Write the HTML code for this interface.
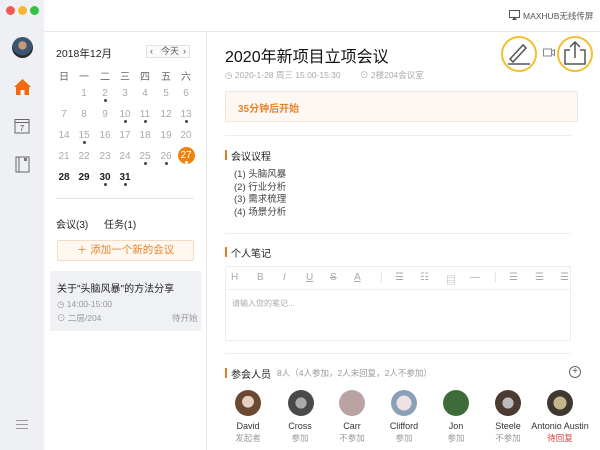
<!DOCTYPE html>
<html><head><meta charset="utf-8"><style>
*{margin:0;padding:0;box-sizing:border-box}
body{width:600px;height:450px;overflow:hidden;background:#fff;font-family:"Liberation Sans","Noto Sans CJK SC",sans-serif;position:relative;color:#333}
.a{position:absolute;white-space:nowrap}
.side{left:0;top:0;width:44px;height:450px;background:#eef0f4}
.dot{width:9px;height:9px;border-radius:50%;top:6px}
.cal span{position:absolute;width:20px;margin-left:-10px;text-align:center;font-size:10px;color:#aaa}
.cal span.b{color:#222;font-weight:bold}
.cal i{position:absolute;width:3px;height:3px;border-radius:50%;background:#444;margin-left:-1.5px}
.bar{width:2px;height:10px;background:#e8792a}
.av{width:26px;height:26px;border-radius:50%;top:390px}
.nm{font-size:9px;color:#333;text-align:center;width:70px;top:421px}
.st{font-size:8.5px;color:#999;text-align:center;width:70px;top:432px}
.tb{font-size:10px;color:#aaa;top:272px}
</style></head><body>
<div class="a side"></div>
<div class="a dot" style="left:6px;background:#f25a55"></div>
<div class="a dot" style="left:18px;background:#f6b632"></div>
<div class="a dot" style="left:30px;background:#33c246"></div>
<div class="a" style="left:44px;top:31px;width:556px;height:1px;background:#e6e6e6"></div>
<div class="a" style="left:206px;top:32px;width:1px;height:418px;background:#e6e6e6"></div>
<div class="a" style="left:12px;top:37px;width:21px;height:21px;border-radius:50%;background:radial-gradient(circle at 50% 40%,#c49a7a 0 25%,#3c5570 26% 60%,#2b2b2b 61%)"></div>
<svg class="a" style="left:13px;top:78px" width="19" height="18" viewBox="0 0 19 18"><path d="M9.5 1 L18 9 L16 9 L16 17 L11.5 17 L11.5 12 L7.5 12 L7.5 17 L3 17 L3 9 L1 9 Z" fill="#f26a10"/></svg>
<svg class="a" style="left:14px;top:117px" width="16" height="17" viewBox="0 0 16 17"><rect x="1" y="2.5" width="14" height="13.5" fill="none" stroke="#666"/><line x1="1" y1="5.5" x2="15" y2="5.5" stroke="#666"/><text x="8" y="14" font-size="8" text-anchor="middle" fill="#555" font-family="Liberation Sans">7</text></svg>
<svg class="a" style="left:15px;top:156px" width="15" height="17" viewBox="0 0 15 17"><rect x="1" y="1" width="13" height="15" fill="none" stroke="#666"/><line x1="4" y1="1" x2="4" y2="16" stroke="#666"/><rect x="9" y="2" width="3" height="3" fill="#777"/></svg>
<div class="a" style="left:16px;top:420px;width:12px;height:1px;background:#999;box-shadow:0 4px 0 #999,0 8px 0 #999"></div>
<div class="a" style="left:56px;top:46px;font-size:10.5px;color:#222">2018年12月</div>
<div class="a" style="left:146px;top:45px;width:44px;height:13px;border:1px solid #e3e3e3;background:#fafafa;font-size:9px;color:#555;line-height:11px"><span style="position:absolute;left:3px">‹</span><span style="position:absolute;left:14px">今天</span><span style="position:absolute;left:36px">›</span></div>
<div class="a cal" style="left:0;top:0;width:206px;height:200px">
<span style="left:64px;top:68px;color:#666">日</span><span style="left:84px;top:68px;color:#666">一</span><span style="left:105px;top:68px;color:#666">二</span><span style="left:125px;top:68px;color:#666">三</span><span style="left:145px;top:68px;color:#666">四</span><span style="left:166px;top:68px;color:#666">五</span><span style="left:186px;top:68px;color:#666">六</span>
<span style="left:84px;top:88px">1</span><span style="left:105px;top:88px">2</span><span style="left:125px;top:88px">3</span><span style="left:145px;top:88px">4</span><span style="left:166px;top:88px">5</span><span style="left:186px;top:88px">6</span>
<span style="left:64px;top:109px">7</span><span style="left:84px;top:109px">8</span><span style="left:105px;top:109px">9</span><span style="left:125px;top:109px">10</span><span style="left:145px;top:109px">11</span><span style="left:166px;top:109px">12</span><span style="left:186px;top:109px">13</span>
<span style="left:64px;top:130px">14</span><span style="left:84px;top:130px">15</span><span style="left:105px;top:130px">16</span><span style="left:125px;top:130px">17</span><span style="left:145px;top:130px">18</span><span style="left:166px;top:130px">19</span><span style="left:186px;top:130px">20</span>
<span style="left:64px;top:151px">21</span><span style="left:84px;top:151px">22</span><span style="left:105px;top:151px">23</span><span style="left:125px;top:151px">24</span><span style="left:145px;top:151px">25</span><span style="left:166px;top:151px">26</span>
<span style="left:186px;top:147px;width:17px;height:17px;margin-left:-8.5px;border-radius:50%;background:#f0820f;color:#fff;line-height:17px">27</span>
<span class="b" style="left:64px;top:172px">28</span><span class="b" style="left:84px;top:172px">29</span><span class="b" style="left:105px;top:172px">30</span><span class="b" style="left:125px;top:172px">31</span>
<i style="left:105px;top:99px"></i><i style="left:125px;top:120px"></i><i style="left:145px;top:120px"></i><i style="left:186px;top:120px"></i><i style="left:84px;top:141px"></i><i style="left:145px;top:162px"></i><i style="left:166px;top:162px"></i><i style="left:186px;top:161px;background:#fff"></i><i style="left:105px;top:183px"></i><i style="left:125px;top:183px"></i>
</div>
<div class="a" style="left:56px;top:198px;width:138px;height:1px;background:#e6e6e6"></div>
<div class="a" style="left:56px;top:216px;font-size:10px;color:#222">会议(3)</div>
<div class="a" style="left:104px;top:216px;font-size:10px;color:#222">任务(1)</div>
<div class="a" style="left:57px;top:240px;width:137px;height:21px;border:1px solid #f3dcc4;background:#fff8f0;border-radius:2px;text-align:center;font-size:10.5px;color:#e8832a;line-height:19px">＋ 添加一个新的会议</div>
<div class="a" style="left:50px;top:271px;width:151px;height:60px;background:#eff1f5"></div>
<div class="a" style="left:57px;top:280px;font-size:10px;color:#222">关于"头脑风暴"的方法分享</div>
<div class="a" style="left:57px;top:299px;font-size:8.5px;color:#999">◷ 14:00-15:00</div>
<div class="a" style="left:57px;top:312px;font-size:8.5px;color:#999">⊙ 二层/204</div>
<div class="a" style="left:172px;top:312px;font-size:8.5px;color:#999">待开始</div>
<svg class="a" style="left:509px;top:10px" width="11" height="10"><rect x="0.5" y="0.5" width="10" height="7" fill="none" stroke="#555"/><path d="M3 10 L5.5 6.5 L8 10Z" fill="#555"/></svg>
<div class="a" style="left:523px;top:10px;font-size:8.5px;color:#555">MAXHUB无线传屏</div>
<div class="a" style="left:225px;top:43px;font-size:16px;color:#111">2020年新项目立项会议</div>
<div class="a" style="left:225px;top:69px;font-size:8.5px;color:#aaa">◷ 2020-1-28 周三 15:00-15:30</div>
<div class="a" style="left:360px;top:69px;font-size:8.5px;color:#aaa">⊙ 2楼204会议室</div>
<div class="a" style="left:501px;top:36px;height:36px;border:2px solid #f1c030;border-radius:50%;width:36px;background:#fff"></div>
<svg class="a" style="left:506px;top:40px" width="26" height="26"><path d="M4 19 L17 5 L20 8 L7 22 Z" fill="none" stroke="#555" stroke-width="1.5"/><line x1="2" y1="24" x2="24" y2="24" stroke="#555" stroke-width="1.5"/></svg>
<svg class="a" style="left:543px;top:48px" width="12" height="9"><rect x="0.5" y="1" width="8" height="7" fill="none" stroke="#888"/><path d="M9 3 L11.5 1.5 V7.5 L9 6" fill="none" stroke="#888"/></svg>
<div class="a" style="left:557px;top:36px;width:36px;height:36px;border:2px solid #f1c030;border-radius:50%;background:#fff"></div>
<svg class="a" style="left:562px;top:40px" width="26" height="26"><path d="M8 10 H3 V24 H23 V10 H18" fill="none" stroke="#555" stroke-width="1.5"/><path d="M13 18 V2 M8 7 L13 2 L18 7" fill="none" stroke="#555" stroke-width="1.5"/></svg>
<div class="a" style="left:225px;top:91px;width:353px;height:31px;border:1px solid #f0e6dc;background:#fdf8f3;border-radius:2px"></div>
<div class="a" style="left:238px;top:100px;font-size:10px;color:#e8832a;font-weight:bold">35分钟后开始</div>
<div class="a" style="left:225px;top:135px;width:346px;height:1px;background:#eee"></div>
<div class="a bar" style="left:225px;top:150px"></div>
<div class="a" style="left:231px;top:148px;font-size:10px;color:#222">会议议程</div>
<div class="a" style="left:234px;top:169px;font-size:9.5px;color:#444;line-height:12.7px">(1) 头脑风暴<br>(2) 行业分析<br>(3) 需求梳理<br>(4) 场景分析</div>
<div class="a" style="left:225px;top:233px;width:346px;height:1px;background:#eee"></div>
<div class="a bar" style="left:225px;top:247px"></div>
<div class="a" style="left:231px;top:245px;font-size:10px;color:#222">个人笔记</div>
<div class="a" style="left:225px;top:266px;width:346px;height:75px;border:1px solid #ececec;border-radius:2px"></div>
<div class="a" style="left:226px;top:289px;width:344px;height:1px;background:#f0f0f0"></div>
<div class="a tb" style="left:231px">H</div><div class="a tb" style="left:257px">B</div><div class="a tb" style="left:283px;font-style:italic">I</div><div class="a tb" style="left:306px;text-decoration:underline">U</div><div class="a tb" style="left:330px;text-decoration:line-through">S</div><div class="a tb" style="left:354px;text-decoration:underline">A</div>
<div class="a tb" style="left:380px;color:#ddd">|</div><div class="a tb" style="left:395px">☰</div><div class="a tb" style="left:420px">☷</div><div class="a tb" style="left:446px">▤</div><div class="a tb" style="left:470px">—</div><div class="a tb" style="left:494px;color:#ddd">|</div><div class="a tb" style="left:509px">☰</div><div class="a tb" style="left:535px">☰</div><div class="a tb" style="left:560px">☰</div>
<div class="a" style="left:232px;top:298px;font-size:8px;color:#aaa">请输入您的笔记...</div>
<div class="a" style="left:225px;top:353px;width:346px;height:1px;background:#eee"></div>
<div class="a bar" style="left:225px;top:368px"></div>
<div class="a" style="left:231px;top:366px;font-size:10px;color:#222">参会人员</div>
<div class="a" style="left:277px;top:367px;font-size:8.5px;color:#999">8人（4人参加，2人未回复，2人不参加）</div>
<div class="a" style="left:569px;top:366px;width:12px;height:12px;border:1px solid #666;border-radius:50%;text-align:center;font-size:10px;line-height:10px;color:#555">+</div>
<div class="a av" style="left:235px;background:radial-gradient(circle at 50% 45%,#e8d0c0 0 30%,#6b4a35 31%)"></div>
<div class="a av" style="left:288px;background:radial-gradient(circle,#aaa 0 30%,#4a4a4a 31%)"></div>
<div class="a av" style="left:339px;background:#b9a3a3"></div>
<div class="a av" style="left:391px;background:radial-gradient(circle,#f0e2e2 0 40%,#8aa0b8 41%)"></div>
<div class="a av" style="left:443px;background:#3f6a3a"></div>
<div class="a av" style="left:495px;background:radial-gradient(circle,#bbb 0 30%,#4b3b30 31%)"></div>
<div class="a av" style="left:547px;background:radial-gradient(circle,#c4b58a 0 35%,#3e3a33 36%)"></div>
<div class="a nm" style="left:213px">David</div><div class="a st" style="left:213px">发起者</div>
<div class="a nm" style="left:265px">Cross</div><div class="a st" style="left:265px">参加</div>
<div class="a nm" style="left:317px">Carr</div><div class="a st" style="left:317px">不参加</div>
<div class="a nm" style="left:369px">Clifford</div><div class="a st" style="left:369px">参加</div>
<div class="a nm" style="left:421px">Jon</div><div class="a st" style="left:421px">参加</div>
<div class="a nm" style="left:473px">Steele</div><div class="a st" style="left:473px">不参加</div>
<div class="a nm" style="left:525px">Antonio Austin</div><div class="a st" style="left:525px;color:#e04040">待回复</div>
</body></html>
